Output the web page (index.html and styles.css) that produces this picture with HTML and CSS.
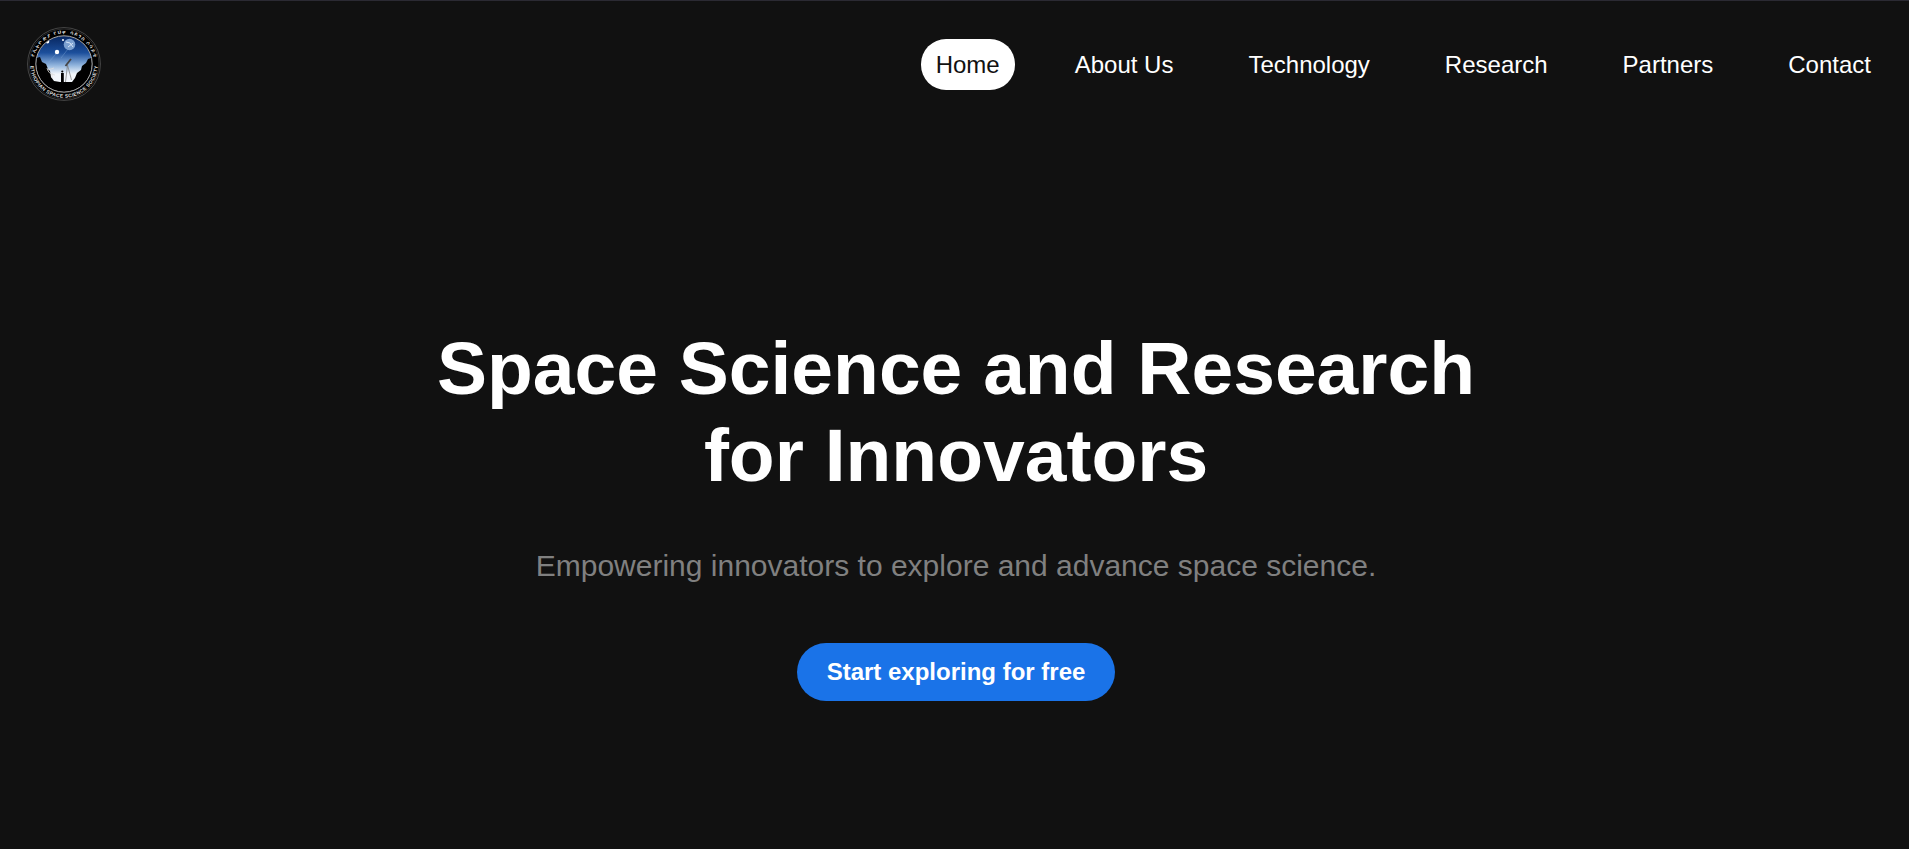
FILE: index.html
```html
<!DOCTYPE html>
<html lang="en">
<head>
<meta charset="utf-8">
<title>Ethiopian Space Science Society</title>
<link rel="stylesheet" href="styles.css">
</head>
<body>
<header class="header">
  <a class="logo" href="#">
    <svg viewBox="0 0 74 74" width="74" height="74" role="img" aria-label="Ethiopian Space Science Society">
      <defs>
        <linearGradient id="sky" x1="0" y1="0" x2="0" y2="1">
          <stop offset="0" stop-color="#07265f"/>
          <stop offset=".3" stop-color="#1c4f9c"/>
          <stop offset=".52" stop-color="#8fb3dc"/>
          <stop offset=".68" stop-color="#f2f6fb"/>
        </linearGradient>
        <clipPath id="disc"><circle cx="37" cy="37" r="28"/></clipPath>
        <path id="arc-top" d="M6.6 37A30.4 30.4 0 0 1 67.4 37"/>
        <path id="arc-bottom" d="M3.2 37A33.8 33.8 0 0 0 70.8 37"/>
      </defs>
      <circle cx="37" cy="37" r="36.4" fill="#000" stroke="#666" stroke-width=".7"/>
      <circle cx="37" cy="37" r="35" fill="none" stroke="#555" stroke-width=".5"/>
      <g clip-path="url(#disc)">
        <rect x="9" y="9" width="56" height="56" fill="url(#sky)"/>
        <circle cx="42.5" cy="17.5" r="5.8" fill="#7ba0d0"/>
        <path d="M39 15l4 1 3 4M41 20l5-4" stroke="#d5e3f5" fill="none"/>
        <circle cx="30" cy="25" r="2.2" fill="#fff"/>
        <circle cx="20.5" cy="14.8" r="1.8" fill="#fff"/>
        <circle cx="36" cy="13" r="1" fill="#fff"/>
        <path d="M29 27l-8 9M41 22l-7 9" stroke="#7fa6d6" stroke-width=".4"/>
        <path d="M9 31l4-1 2 5 4 2 2 5 2 2 1 6 3 4 6 1h12l3-4 2-5 4-3 1-4 4-3 2-4 6-2v37H9z" fill="#000"/>
        <path d="M20 41q1 6 8 7M21 43l6-2M25 46v5" stroke="#ddd" stroke-width=".8" fill="none"/>
        <path d="M44 32l-5.5 7" stroke="#444" stroke-width="1.8"/>
        <path d="M40.5 38l-2 17M40.500 38l4 15" stroke="#777" stroke-width=".7"/>
        <circle cx="35.3" cy="44.500" r="1.1"/>
        <path d="M34 46h2.800v10h-2.800z"/>
      </g>
      <circle cx="37" cy="37" r="28.2" fill="none" stroke="#bbb" stroke-width=".9"/>
      <text class="logo-text logo-text-top"><textPath href="#arc-top" startOffset="50%" textLength="82">የኢትዮጵያ የህዋ ሳይንስ ሶሳይቲ</textPath></text>
      <text class="logo-text"><textPath href="#arc-bottom" startOffset="50%" textLength="102">ETHIOPIAN SPACE SCIENCE SOCIETY</textPath></text>
    </svg>
  </a>
  <nav class="nav">
    <a class="nav-link active" href="#">Home</a>
    <a class="nav-link" href="#">About Us</a>
    <a class="nav-link" href="#">Technology</a>
    <a class="nav-link" href="#">Research</a>
    <a class="nav-link" href="#">Partners</a>
    <a class="nav-link" href="#">Contact</a>
  </nav>
</header>
<main class="hero">
  <h1 class="hero-title">Space Science and Research<br>for Innovators</h1>
  <p class="hero-subtitle">Empowering innovators to explore and advance space science.</p>
  <a class="cta" href="#">Start exploring for free</a>
</main>
</body>
</html>
```

FILE: styles.css
```css
* {
  box-sizing: border-box;
}

body {
  margin: 0;
  height: 849px;
  overflow: hidden;
  border-top: 1px solid #2b2a33;
  background: #111;
  color: #fff;
  font-family: Arial, "Liberation Sans", sans-serif;
}

.header {
  display: flex;
  align-items: center;
  justify-content: space-between;
  height: 127px;
  padding: 0 23px 0 27px;
}

.logo,
.logo svg {
  display: block;
}

.logo {
  margin-bottom: 2px;
}

.logo-text {
  fill: #ddd;
  font-size: 5px;
  font-weight: bold;
  text-anchor: middle;
}

.logo-text-top {
  font-size: 5.2px;
}

.nav {
  display: flex;
  gap: 45px;
}

.nav-link {
  padding: 12px 15px;
  border-radius: 25px;
  color: #fff;
  font-size: 24px;
  line-height: 27px;
  text-decoration: none;
}

.nav-link.active {
  background: #fff;
  color: #111;
}

.hero {
  display: flex;
  flex-direction: column;
  align-items: center;
  padding: 197px 0 0 3px;
  text-align: center;
}

.hero-title {
  margin: 0;
  font-size: 75px;
  line-height: 87px;
}

.hero-subtitle {
  margin: 50px 0 0;
  color: #808080;
  font-size: 30px;
  line-height: 34px;
}

.cta {
  margin-top: 60px;
  padding: 15px 30px;
  border-radius: 29px;
  background: #1a73e8;
  color: #fff;
  font-size: 24px;
  font-weight: bold;
  line-height: 28px;
  text-decoration: none;
}
```
